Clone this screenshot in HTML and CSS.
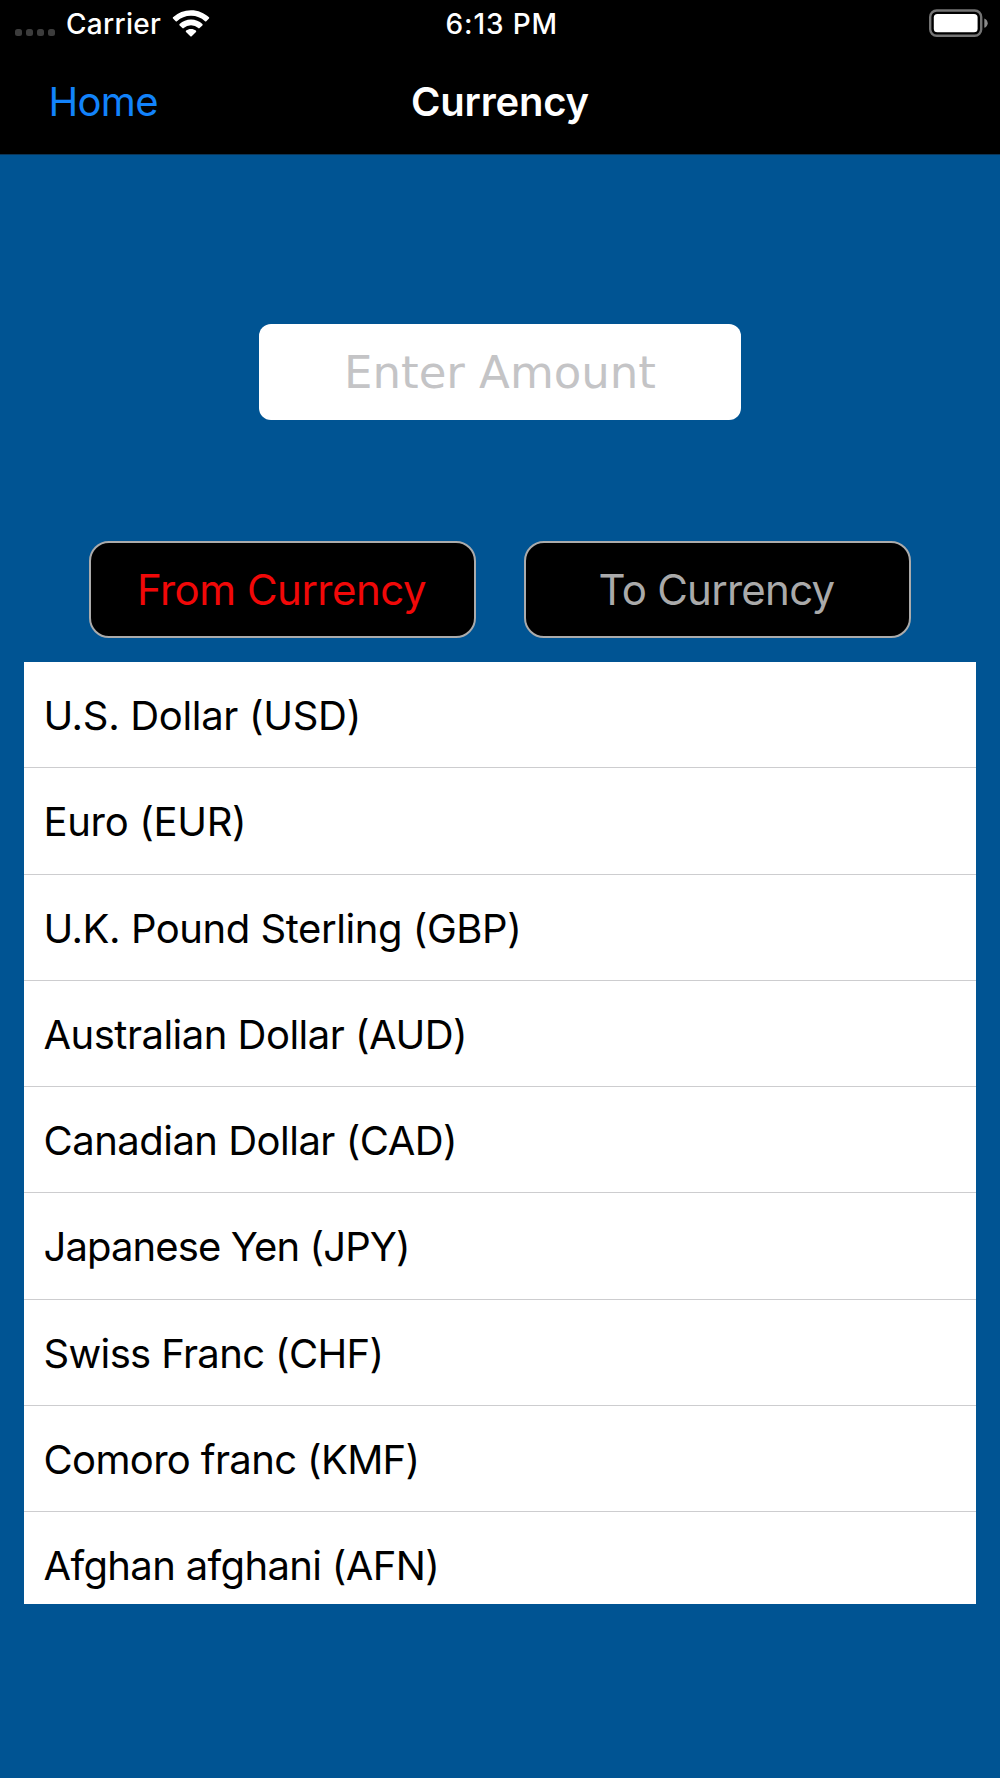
FILE: index.html
```html
<!DOCTYPE html>
<html lang="en">
<head>
  <meta charset="UTF-8">
  <meta name="viewport" content="width=device-width, initial-scale=1.0">
  <title>Currency</title>
  <link rel="stylesheet" href="styles.css">
</head>
<body>
  <header class="header">
    <div class="status-bar">
      <div class="status-left">
        <div class="signal"><span></span><span></span><span></span><span></span></div>
        <span class="carrier">Carrier</span>
        <svg class="wifi" width="38" height="28" viewBox="0 0 38 28" fill="#fff">
          <path d="M19 .2c7 0 13.3 2.7 18 7.1c.4.4.4.9 0 1.3l-2.700 2.700c-.4.4-.9.4-1.300 0A20.300 20.300 0 0 0 19 5.800A20.300 20.300 0 0 0 5 11.300c-.4.4-.9.4-1.300 0L1 8.600c-.4-.4-.4-.9 0-1.300A26.300 26.300 0 0 1 19 .2z"/>
          <path d="M19 9.600c4.400 0 8.400 1.700 11.400 4.500c.4.4.4.9 0 1.300l-2.800 2.700c-.4.4-.9.4-1.300 0A10.700 10.700 0 0 0 19 15.200a10.700 10.700 0 0 0-7.300 2.900c-.4.4-.9.4-1.300 0l-2.800-2.700c-.4-.4-.4-.9 0-1.300A16.600 16.600 0 0 1 19 9.600z"/>
          <path d="M19 19c2 0 3.600.6 4.900 1.600c.5.4.5.9.1 1.300l-4.300 4.300c-.4.4-1 .4-1.400 0L14 21.900c-.4-.4-.4-.9.1-1.300C15.400 19.600 17 19 19 19z"/>
        </svg>
      </div>
      <span class="time">6:13 PM</span>
      <div class="status-right">
        <svg width="60" height="30" viewBox="0 0 60 30">
          <rect x="1.2" y="1.5" width="51" height="25.3" rx="6.5" fill="none" stroke="#747474" stroke-width="2.4"/>
          <rect x="4.8" y="5" width="43.8" height="18.3" rx="3.6" fill="#fff"/>
          <path d="M55.3 9.500c2 .8 3.400 2.500 3.400 4.650s-1.400 3.850-3.400 4.650z" fill="#8a8a8a"/>
        </svg>
      </div>
    </div>
    <nav class="nav-bar">
      <a class="home">Home</a>
      <h1>Currency</h1>
    </nav>
  </header>

  <main class="content">
    <input class="amount" type="text" placeholder="Enter Amount">
    <div class="buttons">
      <button class="btn from">From Currency</button>
      <button class="btn to">To Currency</button>
    </div>
    <ul class="list">
      <li class="loose">U.S. Dollar (USD)</li>
      <li class="loose">Euro (EUR)</li>
      <li class="wide">U.K. Pound Sterling (GBP)</li>
      <li>Australian Dollar (AUD)</li>
      <li>Canadian Dollar (CAD)</li>
      <li class="tight">Japanese Yen (JPY)</li>
      <li class="snug">Swiss Franc (CHF)</li>
      <li class="snug">Comoro franc (KMF)</li>
      <li class="snug">Afghan afghani (AFN)</li>
    </ul>
  </main>
</body>
</html>
```
FILE: styles.css
```css
* { box-sizing: border-box; }
body { margin: 0; height: 1778px; overflow: hidden; background: #005493; font-family: Inter, "Liberation Sans", sans-serif; }

.header { height: 155px; background: #000; color: #fff; border-bottom: 1px solid #0b3557; }
.status-bar { display: grid; grid-template-columns: 1fr auto 1fr; align-items: center; height: 48px; padding: 0 11px 0 14.5px; font-size: 28px; font-weight: 500; line-height: 48px; }
.status-left { display: flex; align-items: center; }
.signal { display: flex; gap: 4px; width: 51.5px; margin-top: 17px; }
.signal span { width: 7.2px; height: 7.2px; border-radius: 2.5px; background: #3c3c3c; }
.carrier { letter-spacing: 0.28px; }
.wifi { margin: -1px 0 0 11px; }
.time { letter-spacing: 0.9px; }
.status-right { display: flex; justify-content: flex-end; }

.nav-bar { display: grid; grid-template-columns: 1fr auto 1fr; align-items: center; height: 106px; padding: 0 48.5px; font-size: 40px; line-height: 108px; }
.home { color: #1283fb; letter-spacing: -0.68px; }
.nav-bar h1 { margin: 0; font-size: 40px; font-weight: 600; letter-spacing: -0.19px; }

.content { display: flex; flex-direction: column; align-items: center; padding: 169px 24px 0; }
.amount { width: 482px; height: 96px; padding: 0; border: none; border-radius: 12px; background: #fff; font-family: "DejaVu Sans", sans-serif; font-size: 45px; text-align: center; }
.amount::placeholder { color: #c4c4c6; opacity: 1; }
.buttons { display: flex; gap: 48px; margin-top: 121px; }
.btn { width: 387px; height: 97px; padding: 0 2px 0 0; border: 2.4px solid #ababab; border-radius: 20px; background: #000; font-family: inherit; font-size: 42px; }
.from { color: #f10808; letter-spacing: -0.5px; }
.to { color: #aaa; letter-spacing: -0.74px; }

.list { width: 952px; height: 942px; margin: 24px 0 0; padding: 0; overflow: hidden; list-style: none; background: #fff; color: #000; }
.list li { height: 106.28px; padding-left: 19.5px; border-bottom: 1px solid #cdcdcf; font-size: 40px; line-height: 108.6px; letter-spacing: -0.51px; }
.list .loose { letter-spacing: -0.32px; }
.list .wide { letter-spacing: -0.44px; }
.list .snug { letter-spacing: -0.65px; }
.list .tight { letter-spacing: -0.89px; }
```
